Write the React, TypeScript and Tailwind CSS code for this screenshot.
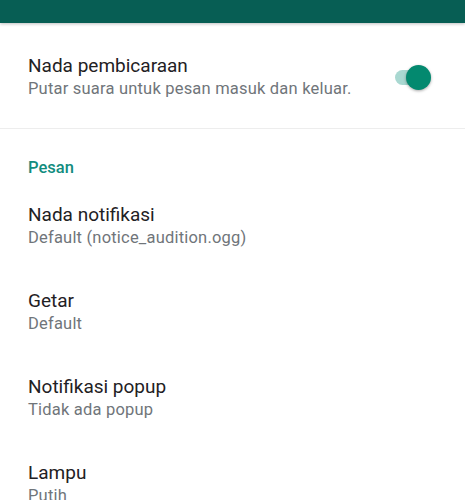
import React from "react";

const items = [
  { t: "Nada notifikasi", s: "Default (notice_audition.ogg)" },
  { t: "Getar", s: "Default" },
  { t: "Notifikasi popup", s: "Tidak ada popup" },
  { t: "Lampu", s: "Putih" },
];

export default function App() {
  return (
    <div
      className="w-[465px] h-[500px] overflow-hidden bg-white"
      style={{ fontFamily: "Roboto, 'Noto Sans', sans-serif" }}
    >
      <div className="relative z-10 h-[23px] overflow-hidden bg-[#075e54] shadow-[0_1px_3px_rgba(0,0,0,0.25)]">
        <div className="ml-[85px] mt-[-21px] text-[21px] leading-[24px] font-medium text-white/70">
          Notifikasi
        </div>
      </div>

      <div className="flex items-center justify-between pl-[28px] pr-[34px] pt-[31px] pb-[28px] border-b border-[#ededed]">
        <div className="flex flex-col">
          <div className="text-[19px] leading-[24px] text-[#1f2124]">Nada pembicaraan</div>
          <div className="text-[16.5px] leading-[22px] tracking-[0.2px] text-[#70757a]">
            Putar suara untuk pesan masuk dan keluar.
          </div>
        </div>
        <div className="relative w-[38px] h-[26px] flex items-center">
          <div className="absolute left-[2px] w-[30px] h-[15px] rounded-full bg-[#a9d8d1]" />
          <div className="absolute right-0 w-[25px] h-[25px] rounded-full bg-[#03896f] shadow-[0_1px_3px_rgba(0,0,0,0.35)]" />
        </div>
      </div>

      <div className="pl-[28px] pt-[29px] pb-[4px] text-[16.5px] leading-[20px] font-medium text-[#128c7e]">
        Pesan
      </div>

      {items.map((it) => (
        <div key={it.t} className="h-[86px] pl-[28px] pt-[21px] flex flex-col">
          <div className="text-[19px] leading-[24px] text-[#1f2124]">{it.t}</div>
          <div className="text-[16.5px] leading-[22px] tracking-[0.2px] text-[#70757a]">{it.s}</div>
        </div>
      ))}
    </div>
  );
}
